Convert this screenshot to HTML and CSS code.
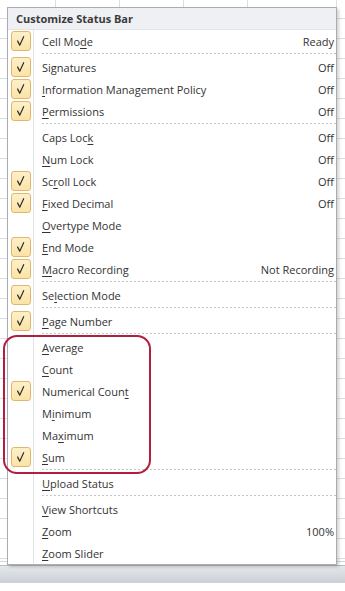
FILE: index.html
```html
<!DOCTYPE html>
<html>

<head>
    <meta charset="utf-8">
    <title>Customize Status Bar</title>
    <link rel="stylesheet" href="styles.css">
</head>

<body>
    <div id="sheet"></div>
    <div id="statusbar"></div>

    <div id="menu">
        <div class="head">Customize Status Bar</div>
        <div class="body">
            <div class="item on"><span class="ico"></span><span class="txt">Cell Mo<u>d</u>e</span><span class="val">Ready</span></div>
            <div class="sep"></div>
            <div class="item on"><span class="ico"></span><span class="txt">Si<u>g</u>natures</span><span class="val">Off</span></div>
            <div class="item on"><span class="ico"></span><span class="txt"><u>I</u>nformation Management Policy</span><span class="val">Off</span></div>
            <div class="item on"><span class="ico"></span><span class="txt"><u>P</u>ermissions</span><span class="val">Off</span></div>
            <div class="sep"></div>
            <div class="item"><span class="ico"></span><span class="txt">Caps Loc<u>k</u></span><span class="val">Off</span></div>
            <div class="item"><span class="ico"></span><span class="txt"><u>N</u>um Lock</span><span class="val">Off</span></div>
            <div class="item on"><span class="ico"></span><span class="txt">Sc<u>r</u>oll Lock</span><span class="val">Off</span></div>
            <div class="item on"><span class="ico"></span><span class="txt"><u>F</u>ixed Decimal</span><span class="val">Off</span></div>
            <div class="item"><span class="ico"></span><span class="txt"><u>O</u>vertype Mode</span></div>
            <div class="item on"><span class="ico"></span><span class="txt"><u>E</u>nd Mode</span></div>
            <div class="item on"><span class="ico"></span><span class="txt"><u>M</u>acro Recording</span><span class="val">Not Recording</span></div>
            <div class="sep"></div>
            <div class="item on"><span class="ico"></span><span class="txt">Se<u>l</u>ection Mode</span></div>
            <div class="sep"></div>
            <div class="item on"><span class="ico"></span><span class="txt"><u>P</u>age Number</span></div>
            <div class="sep"></div>
            <div class="item"><span class="ico"></span><span class="txt"><u>A</u>verage</span></div>
            <div class="item"><span class="ico"></span><span class="txt"><u>C</u>ount</span></div>
            <div class="item on"><span class="ico"></span><span class="txt">Numerical Coun<u>t</u></span></div>
            <div class="item"><span class="ico"></span><span class="txt">M<u>i</u>nimum</span></div>
            <div class="item"><span class="ico"></span><span class="txt">Ma<u>x</u>imum</span></div>
            <div class="item on"><span class="ico"></span><span class="txt"><u>S</u>um</span></div>
            <div class="sep"></div>
            <div class="item"><span class="ico"></span><span class="txt"><u>U</u>pload Status</span></div>
            <div class="sep"></div>
            <div class="item"><span class="ico"></span><span class="txt"><u>V</u>iew Shortcuts</span></div>
            <div class="item"><span class="ico"></span><span class="txt"><u>Z</u>oom</span><span class="val">100%</span></div>
            <div class="item"><span class="ico"></span><span class="txt"><u>Z</u>oom Slider</span></div>
        </div>
    </div>

    <!-- red highlight drawn over the menu -->
    <div id="mark"></div>

    <script type="text/javascript">
        (function () {
            var check = '<svg width="20" height="20" viewBox="0 0 20 20">' +
                '<path d="M6 9.6 L8.6 14.6 L13.2 4.6" fill="none" stroke="#2b2b2b" stroke-width="1.3" stroke-linejoin="round"/></svg>';
            var aOn = document.querySelectorAll('.item.on .ico');
            for (var i = 0; i < aOn.length; i++) {
                aOn[i].innerHTML = check;
            }
        })();
    </script>
</body>

</html>
```

FILE: styles.css
```css
* {
    padding: 0;
    margin: 0;
    box-sizing: border-box;
}

body {
    width: 345px;
    height: 591px;
    overflow: hidden;
    background: #fff;
    font-family: "Open Sans", "Noto Sans", sans-serif;
    font-size: 11px;
    color: #333;
}

#sheet {
    height: 565px;
    background:
        linear-gradient(#d4d7da, #d4d7da) 0 561px / 100% 1px no-repeat,
        repeating-linear-gradient(90deg, transparent 0 55px, #dcdfe2 55px 56px, transparent 56px 64px) -64px 0 / 100% 100%,
        repeating-linear-gradient(180deg, transparent 0 18px, #dcdfe2 18px 19px, transparent 19px 20px);
    background-color: #fff;
}

#statusbar {
    height: 18px;
    background: linear-gradient(#e4e7eb, #ccd0d6);
    border-top: 1px solid #b9bec5;
}

#menu {
    position: absolute;
    left: 7px;
    top: 7px;
    width: 330px;
    border: 1px solid #a9adb3;
    background: #fff;
    box-shadow: 2px 2px 3px rgba(0, 0, 0, 0.18);
}

#menu .head {
    height: 22px;
    line-height: 21px;
    padding-left: 8px;
    font-weight: bold;
    color: #3b3b3b;
    background: #eef0f3;
    border-bottom: 1px solid #e1e4e8;
}

#menu .body {
    background: linear-gradient(#e3e4e6, #e3e4e6) 25px 0 / 1px 100% no-repeat;
}

#menu .item {
    display: flex;
    align-items: center;
    height: 22px;
    padding-right: 2px;
}

#menu .ico {
    width: 34px;
    height: 20px;
    flex: none;
    padding-left: 3px;
}

#menu .ico svg {
    display: block;
}

#menu .on .ico svg {
    width: 20px;
    height: 20px;
    border: 1px solid #e2b76c;
    border-radius: 3px;
    background: linear-gradient(#fdf0c8, #fbe3a6);
}

#menu .txt {
    flex: 1;
    white-space: nowrap;
}

#menu u {
    text-underline-offset: 2px;
}

#menu .val {
    white-space: nowrap;
}

#menu .sep {
    height: 4px;
    margin-left: 34px;
    background: repeating-linear-gradient(90deg, #c4c6c9 0 2px, transparent 2px 4px) 0 1px / 100% 1px no-repeat;
}

#mark {
    position: absolute;
    left: 3px;
    top: 335px;
    width: 148px;
    height: 139px;
    border: 2.5px solid #b01f3d;
    border-radius: 14px;
}
```
